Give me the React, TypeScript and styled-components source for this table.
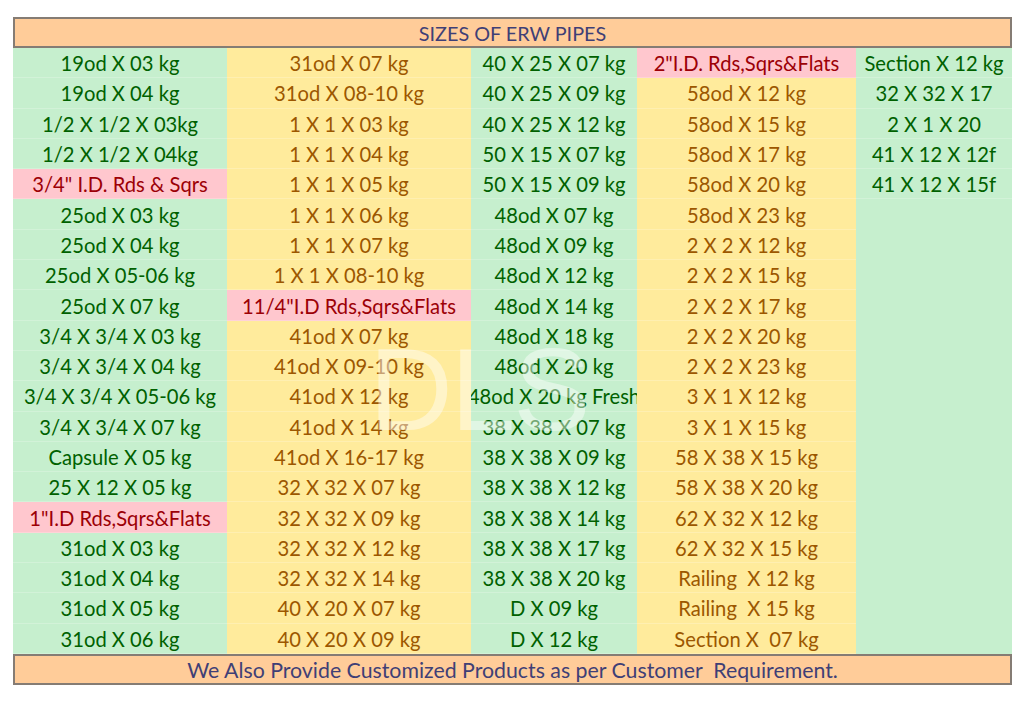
import React from 'react';
import styled, { createGlobalStyle } from 'styled-components';

const GlobalStyle = createGlobalStyle`
  html, body {
    margin: 0;
    padding: 0;
    background: #ffffff;
  }
  body {
    font-family: Lato, "Open Sans", "Liberation Sans", sans-serif;
  }
`;

type Tone = 'green' | 'yellow';

// "!" at the start marks a heading cell (pink)
const columns: { tone: Tone; items: string[] }[] = [
  {
    tone: 'green',
    items: [
      '19od X 03 kg',
      '19od X 04 kg',
      '1/2 X 1/2 X 03kg',
      '1/2 X 1/2 X 04kg',
      '!3/4" I.D. Rds & Sqrs',
      '25od X 03 kg',
      '25od X 04 kg',
      '25od X 05-06 kg',
      '25od X 07 kg',
      '3/4 X 3/4 X 03 kg',
      '3/4 X 3/4 X 04 kg',
      '3/4 X 3/4 X 05-06 kg',
      '3/4 X 3/4 X 07 kg',
      'Capsule X 05 kg',
      '25 X 12 X 05 kg',
      '!1"I.D Rds,Sqrs&Flats',
      '31od X 03 kg',
      '31od X 04 kg',
      '31od X 05 kg',
      '31od X 06 kg',
    ],
  },
  {
    tone: 'yellow',
    items: [
      '31od X 07 kg',
      '31od X 08-10 kg',
      '1 X 1 X 03 kg',
      '1 X 1 X 04 kg',
      '1 X 1 X 05 kg',
      '1 X 1 X 06 kg',
      '1 X 1 X 07 kg',
      '1 X 1 X 08-10 kg',
      '!11/4"I.D Rds,Sqrs&Flats',
      '41od X 07 kg',
      '41od X 09-10 kg',
      '41od X 12 kg',
      '41od X 14 kg',
      '41od X 16-17 kg',
      '32 X 32 X 07 kg',
      '32 X 32 X 09 kg',
      '32 X 32 X 12 kg',
      '32 X 32 X 14 kg',
      '40 X 20 X 07 kg',
      '40 X 20 X 09 kg',
    ],
  },
  {
    tone: 'green',
    items: [
      '40 X 25 X 07 kg',
      '40 X 25 X 09 kg',
      '40 X 25 X 12 kg',
      '50 X 15 X 07 kg',
      '50 X 15 X 09 kg',
      '48od X 07 kg',
      '48od X 09 kg',
      '48od X 12 kg',
      '48od X 14 kg',
      '48od X 18 kg',
      '48od X 20 kg',
      '48od X 20 kg Fresh',
      '38 X 38 X 07 kg',
      '38 X 38 X 09 kg',
      '38 X 38 X 12 kg',
      '38 X 38 X 14 kg',
      '38 X 38 X 17 kg',
      '38 X 38 X 20 kg',
      'D X 09 kg',
      'D X 12 kg',
    ],
  },
  {
    tone: 'yellow',
    items: [
      '!2"I.D. Rds,Sqrs&Flats',
      '58od X 12 kg',
      '58od X 15 kg',
      '58od X 17 kg',
      '58od X 20 kg',
      '58od X 23 kg',
      '2 X 2 X 12 kg',
      '2 X 2 X 15 kg',
      '2 X 2 X 17 kg',
      '2 X 2 X 20 kg',
      '2 X 2 X 23 kg',
      '3 X 1 X 12 kg',
      '3 X 1 X 15 kg',
      '58 X 38 X 15 kg',
      '58 X 38 X 20 kg',
      '62 X 32 X 12 kg',
      '62 X 32 X 15 kg',
      'Railing  X 12 kg',
      'Railing  X 15 kg',
      'Section X  07 kg',
    ],
  },
  {
    tone: 'green',
    items: [
      'Section X 12 kg',
      '32 X 32 X 17',
      '2 X 1 X 20',
      '41 X 12 X 12f',
      '41 X 12 X 15f',
    ],
  },
];

const palette = {
  green: { bg: '#c6efce', fg: '#006100' },
  yellow: { bg: '#ffeb9c', fg: '#9c5700' },
  pink: { bg: '#ffc7ce', fg: '#9c0006' },
};

const Page = styled.div`
  padding: 17px 0 0 13px;
`;

const Sheet = styled.div`
  position: relative;
  width: 999px;
`;

const Banner = styled.div<{ $size: number }>`
  box-sizing: border-box;
  height: 31px;
  display: flex;
  align-items: center;
  justify-content: center;
  background: #ffcc99;
  border: 2px solid #857c74;
  color: #3f3f76;
  font-size: ${(p) => p.$size}px;
  white-space: pre;
`;

const Body = styled.div`
  display: grid;
  grid-template-columns: 214px 244px 166px 219px 156px;
  height: 606px;
`;

const Column = styled.div<{ $tone: Tone }>`
  display: flex;
  flex-direction: column;
  background: ${(p) => palette[p.$tone].bg};
  color: ${(p) => palette[p.$tone].fg};
  overflow: hidden;
`;

const Cell = styled.div<{ $hot?: boolean }>`
  box-sizing: border-box;
  height: 30.3px;
  flex: none;
  display: flex;
  align-items: center;
  justify-content: center;
  overflow: hidden;
  white-space: pre;
  font-size: 20.2px;
  padding-top: 1px;
  border-bottom: 1px solid rgba(255, 255, 255, 0.22);
  ${(p) =>
    p.$hot &&
    `
    background: ${palette.pink.bg};
    color: ${palette.pink.fg};
  `}
`;

const Watermark = styled.div`
  position: absolute;
  left: 356px;
  top: 315px;
  font-family: "Liberation Sans", sans-serif;
  font-size: 116px;
  line-height: 1;
  letter-spacing: -2px;
  color: rgba(255, 255, 255, 0.45);
  pointer-events: none;
`;

export default function App() {
  return (
    <Page>
      <GlobalStyle />
      <Sheet>
        <Banner $size={19.8}>SIZES OF ERW PIPES</Banner>
        <Body>
          {columns.map((col, ci) => (
            <Column key={ci} $tone={col.tone}>
              {col.items.map((item, ri) => {
                const hot = item.startsWith('!');
                return (
                  <Cell key={ri} $hot={hot}>
                    {hot ? item.slice(1) : item}
                  </Cell>
                );
              })}
            </Column>
          ))}
        </Body>
        <Banner $size={21.3}>
          We Also Provide Customized Products as per Customer  Requirement.
        </Banner>
        <Watermark>DLS</Watermark>
      </Sheet>
    </Page>
  );
}
